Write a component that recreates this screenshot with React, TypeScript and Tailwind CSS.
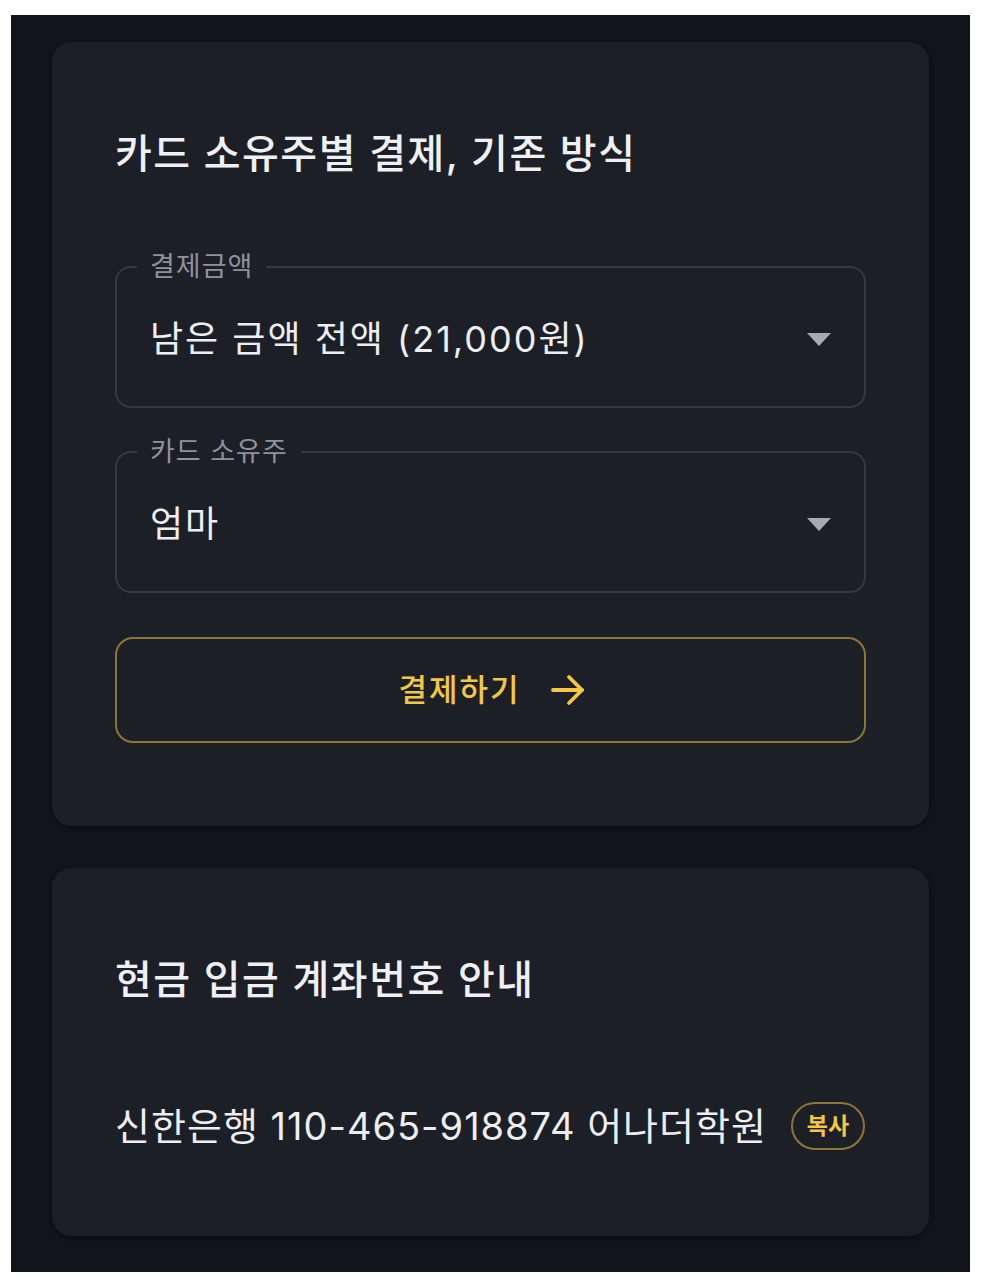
import { useState } from 'react'

const font = { fontFamily: "Inter, 'Noto Sans CJK KR', sans-serif" }

interface SelectFieldProps {
  label: string
  value: string
}

function Caret() {
  return (
    <svg width="24" height="13" viewBox="0 0 24 13" className="shrink-0">
      <path d="M0 0 H24 L12 13 Z" fill="#a9a9b0" />
    </svg>
  )
}

function SelectField({ label, value }: SelectFieldProps) {
  return (
    <fieldset className="rounded-[16px] border-2 border-[#343847] px-[20px]">
      <legend className="px-[13px] text-[27px] leading-[32px] tracking-[1px] text-[#8e929c]">{label}</legend>
      <div className="flex h-[123px] items-center justify-between px-[13px] pb-[11px]">
        <span className="text-[36px] leading-[44px] tracking-[2px] text-[#eceef2]">{value}</span>
        <Caret />
      </div>
    </fieldset>
  )
}

function ArrowIcon() {
  return (
    <svg width="34" height="34" viewBox="0 0 34 34" fill="none" stroke="#f3c746" strokeWidth="3.8" strokeLinecap="round" strokeLinejoin="round">
      <path d="M2 17 H31" />
      <path d="M18 4 L31 17 L18 30" />
    </svg>
  )
}

export default function App() {
  const [copied, setCopied] = useState(false)

  return (
    <div className="min-h-screen bg-white pl-[11px] pt-[15px]" style={font}>
      <div className="flex h-[1257px] w-[959px] flex-col gap-[42px] bg-[#111418] px-[41px] pt-[27px]">
        <section className="rounded-[20px] bg-[#1d1f27] px-[63px] pb-[83px] pt-[90px] shadow-[0_2px_4px_rgba(0,0,0,0.35)]">
          <h2 className="text-[40px] font-medium leading-[44px] tracking-[1.5px] text-[#eef0f3]">카드 소유주별 결제, 기존 방식</h2>
          <div className="mt-[75px] flex flex-col gap-[28px]">
            <SelectField label="결제금액" value="남은 금액 전액 (21,000원)" />
            <SelectField label="카드 소유주" value="엄마" />
          </div>
          <button className="mt-[44px] flex h-[106px] w-full items-center justify-center gap-[30px] rounded-[18px] border-2 border-[#8a7736] pl-[2px]">
            <span className="text-[31px] font-medium leading-[40px] tracking-[2px] text-[#f3c746]">결제하기</span>
            <ArrowIcon />
          </button>
        </section>

        <section className="rounded-[20px] bg-[#1d1f27] px-[63px] pb-[86px] pt-[90px] shadow-[0_2px_4px_rgba(0,0,0,0.35)]">
          <h2 className="text-[40px] font-medium leading-[44px] tracking-[1.5px] text-[#eef0f3]">현금 입금 계좌번호 안내</h2>
          <div className="mt-[100px] flex h-[48px] items-center gap-[24px]">
            <span className="text-[38px] leading-[48px] tracking-[1px] text-[#eceef2]">신한은행 110-465-918874 어나더학원</span>
            <button
              onClick={() => setCopied(true)}
              className="flex h-[48px] w-[74px] items-center justify-center rounded-full border-2 border-[#8a7736] text-[23px] font-bold text-[#f3c746]"
            >
              {copied ? '복사됨' : '복사'}
            </button>
          </div>
        </section>
      </div>
    </div>
  )
}
